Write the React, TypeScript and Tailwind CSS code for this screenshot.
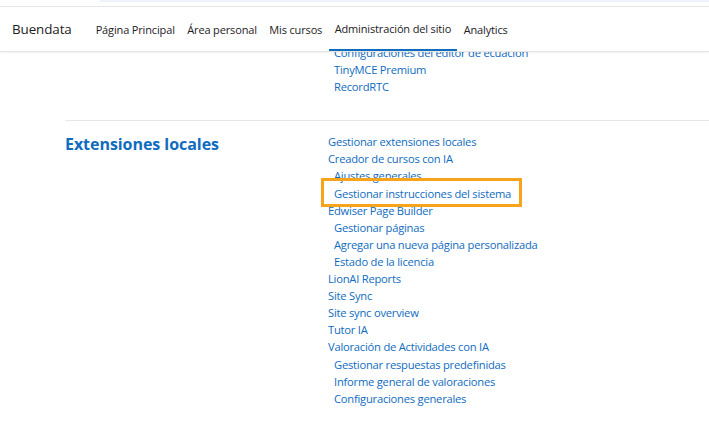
const font = { fontFamily: '"Open Sans", "Noto Sans", sans-serif' }

const navItems = ['Página Principal', 'Área personal', 'Mis cursos', 'Administración del sitio', 'Analytics']

const prevLinks = [
  { label: 'Configuraciones del editor de ecuación', sub: true },
  { label: 'TinyMCE Premium', sub: true },
  { label: 'RecordRTC', sub: true },
]

const localLinks = [
  { label: 'Gestionar extensiones locales' },
  { label: 'Creador de cursos con IA' },
  { label: 'Ajustes generales', sub: true },
  { label: 'Gestionar instrucciones del sistema', sub: true, marked: true },
  { label: 'Edwiser Page Builder' },
  { label: 'Gestionar páginas', sub: true },
  { label: 'Agregar una nueva página personalizada', sub: true },
  { label: 'Estado de la licencia', sub: true },
  { label: 'LionAI Reports' },
  { label: 'Site Sync' },
  { label: 'Site sync overview' },
  { label: 'Tutor IA' },
  { label: 'Valoración de Actividades con IA' },
  { label: 'Gestionar respuestas predefinidas', sub: true },
  { label: 'Informe general de valoraciones', sub: true },
  { label: 'Configuraciones generales', sub: true },
]

type Item = { label: string; sub?: boolean; marked?: boolean }

function LinkList({ items }: { items: Item[] }) {
  return (
    <ul className="flex flex-col">
      {items.map(i => (
        <li key={i.label} className={`h-[17.1px] leading-[17.1px] ${i.sub ? 'pl-[6px]' : ''}`}>
          <a href="#" className="relative text-[11.2px] tracking-[-0.23px] whitespace-nowrap text-[#0f6cbf]">
            {i.label}
            {i.marked && (
              <span className="pointer-events-none absolute -top-[8px] -bottom-[6px] -left-[13px] -right-[11px] border-[3px] border-[#f7a31c]" />
            )}
          </a>
        </li>
      ))}
    </ul>
  )
}

export default function App() {
  return (
    <div className="h-[423px] w-[709px] overflow-hidden bg-white" style={font}>
      <div className="relative z-10 bg-white">
        <div className="h-[6px] pl-[100px]">
          <div className="h-[2px] bg-[#eef3fc]" />
        </div>
        <nav className="flex h-[46px] items-center border-y border-[#e6e6e6] px-[12px] shadow-[0_1px_2px_rgba(0,0,0,0.06)]">
          <span className="mr-[24px] pt-[1px] text-[13.4px] tracking-[-0.1px] text-[#1d2125]">Buendata</span>
          <div className="flex h-full gap-[12.5px]">
            {navItems.map(n => (
              <a
                key={n}
                href="#"
                className={`flex h-full items-center pt-[3px] text-[11px] tracking-[-0.15px] text-[#1d2125] ${
                  n === 'Administración del sitio' ? '-mx-[6px] border-b-2 border-[#0f6cbf] px-[6px]' : ''
                }`}
              >
                {n}
              </a>
            ))}
          </div>
        </nav>
      </div>

      <main className="pl-[65px]">
        <div className="-mt-[9px] pl-[263px]">
          <LinkList items={prevLinks} />
        </div>
        <div className="mt-[26px] border-t border-[#e8e8e8] pt-[11px]">
          <div className="flex">
            <h3 className="w-[263px] pt-[1px] text-[16px] leading-[22px] tracking-[-0.05px] font-bold text-[#0f6cbf]">
              Extensiones locales
            </h3>
            <LinkList items={localLinks} />
          </div>
        </div>
      </main>
    </div>
  )
}
